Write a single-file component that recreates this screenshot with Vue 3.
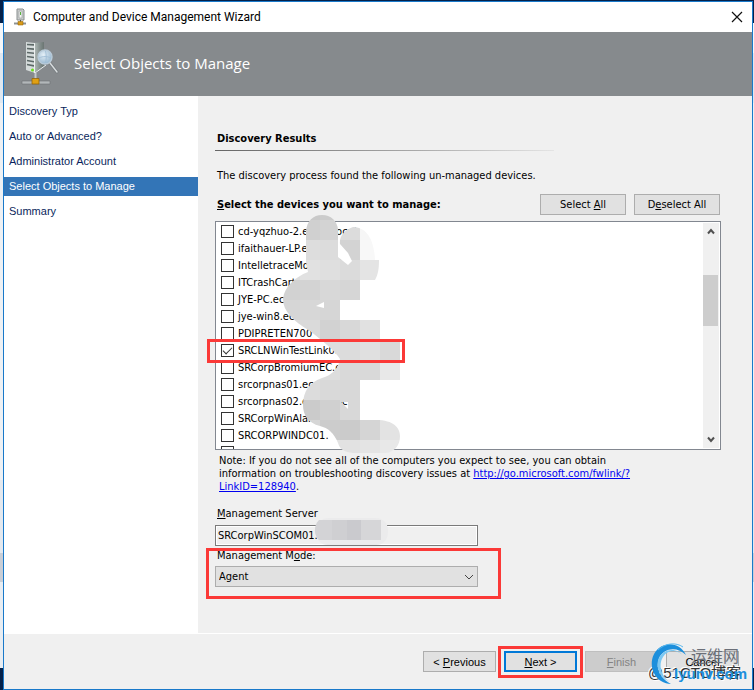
<script setup>
import { ref } from 'vue'

const steps = [
  'Discovery Typ',
  'Auto or Advanced?',
  'Administrator Account',
  'Select Objects to Manage',
  'Summary',
]
const current = 3

const devices = ref([
  { name: 'cd-yqzhuo-2.ecorp.local', on: false },
  { name: 'ifaithauer-LP.ecorp.', on: false },
  { name: 'IntelletraceMonitor.', on: false },
  { name: 'ITCrashCart.e', on: false },
  { name: 'JYE-PC.ecorp', on: false },
  { name: 'jye-win8.eco', on: false },
  { name: 'PDIPRETEN700', on: false },
  { name: 'SRCLNWinTestLink01.', on: true },
  { name: 'SRCorpBromiumEC.e', on: false },
  { name: 'srcorpnas01.ec', on: false },
  { name: 'srcorpnas02.ecorp.loc', on: false },
  { name: 'SRCorpWinAlarm', on: false },
  { name: 'SRCORPWINDC01.', on: false },
  { name: '', on: false },
])

const mode = ref('Agent')
const server = ref('SRCorpWinSCOM01.')

function setAll(value) {
  devices.value.forEach((d) => (d.on = value))
}

// Grey shade of each 20px mosaic tile, row by row
const mosaic = [
  ['c9', 'c9', 'cc', 'dc', 'f6'],
  ['d0', 'd0', 'd3', 'dc', 'f6'],
  ['dc', 'dd', 'dc', 'd3', 'f8'],
  ['dc', 'e1', 'df', 'db', 'e4'],
  ['d2', 'd3', 'd8', 'd6', 'd8'],
  ['d6', 'd7', 'd6', 'd3', 'd8'],
  ['da', 'da', 'd2', 'd8', 'e1'],
  ['e0', 'e0', 'dd', 'dc', 'e0', 'd9'],
  ['e0', 'e0', 'dd', 'd9', 'd9', 'e8'],
  ['dc', 'dc', 'd9', 'd8', 'd8', 'e8'],
  ['cb', 'cb', 'd0', 'd8', 'd9', 'e8'],
  ['cc', 'd6', 'cc', 'cb', 'd5', 'e3'],
  ['dd', 'dd', 'e2', 'e2', 'e4', 'e8'],
]
const tiles = mosaic.flatMap((row, r) =>
  row.map((v, c) => ({ x: c * 20, y: r * 20 - 15, fill: '#' + v + v + v })),
)
</script>

<template>
  <div class="desktop">
    <section class="window" aria-label="Computer and Device Management Wizard">
      <div class="titlebar">
        <svg class="app-icon" width="14" height="18" viewBox="0 0 14 18" aria-hidden="true">
          <path d="M4 1h6l1 1v10H4z" fill="#c9cccc" stroke="#8b9091" stroke-width="1" />
          <path d="M6 3h3v7H6z" fill="#f4f6f4" stroke="#a4aaa8" stroke-width=".8" />
          <path d="M7 4h1v3H7z" fill="#58b23f" />
          <path d="M7 12h1v2H7z" fill="#555" />
          <path d="M1 14.500h12v2H1z" fill="#8d9293" />
          <path d="M5 13.500h5v3.500H5z" fill="#d99b17" stroke="#9b6a09" stroke-width=".6" />
        </svg>
        <span class="title">Computer and Device Management Wizard</span>
        <button class="close" type="button" aria-label="Close">
          <svg width="12" height="12" viewBox="0 0 12 12">
            <path d="M1 1l10 10M11 1L1 11" stroke="#111" stroke-width="1.200" fill="none" />
          </svg>
        </button>
      </div>

      <header class="banner">
        <svg class="banner-icon" width="38" height="46" viewBox="0 0 38 46" aria-hidden="true">
          <defs>
            <linearGradient id="tower" x1="0" x2="1">
              <stop offset="0" stop-color="#b4bdbb" />
              <stop offset=".6" stop-color="#838e8c" />
              <stop offset="1" stop-color="#6b7572" />
            </linearGradient>
            <radialGradient id="lens" cx=".4" cy=".35" r=".7">
              <stop offset="0" stop-color="#e4eff7" />
              <stop offset="1" stop-color="#93b4cd" />
            </radialGradient>
          </defs>
          <path d="M13 2l10-1v24l-10 7z" fill="url(#tower)" />
          <path d="M5 1l9 1v30l-9-3z" fill="#d5dbdb" />
          <path d="M6 3.500l7 .4M6 7.500l7 .6M6 11.500l7 .8M6 15.500l7 1M6 19.500l7 1.200M6 23.500l7 1.400" stroke="#5d6968" stroke-width="1.600" />
          <path d="M13.500 2v30" stroke="#eef1f1" stroke-width="1" />
          <circle cx="11.500" cy="29" r="1.500" fill="#6be11c" />
          <path d="M14 32l11-8" stroke="#e7ecec" />
          <path d="M29 22l7 9" stroke="#777d80" stroke-width="3" stroke-linecap="round" />
          <path d="M29 22l7 9" stroke="#d8dcde" stroke-width="1.400" stroke-linecap="round" />
          <circle cx="24" cy="16" r="7" fill="url(#lens)" stroke="#b9cbd9" stroke-width="1.400" />
          <path d="M24.500 10c1 4 1 8 0 12M18 17c4-2 8-2 12 0" stroke="#9dbbd4" stroke-width=".8" fill="none" />
          <path d="M14.500 32v6" stroke="#c4c9ca" stroke-width="2" />
          <path d="M1 40h28v3H1z" fill="#b2b7b9" stroke="#6c7173" stroke-width=".6" />
          <path d="M11 37.500h7v5.500h-7z" fill="#e0a012" stroke="#94640a" stroke-width=".8" />
        </svg>
        <h1>Select Objects to Manage</h1>
      </header>

      <div class="body">
        <nav class="steps" aria-label="Wizard steps">
          <a v-for="(s, i) in steps" :key="s" href="#" :class="{ active: i === current }">{{ s }}</a>
        </nav>

        <main class="content">
          <h2>Discovery Results</h2>
          <div class="rule"></div>
          <p class="intro">The discovery process found the following un-managed devices.</p>

          <div class="list-head">
            <h3><u>S</u>elect the devices you want to manage:</h3>
            <button type="button" @click="setAll(true)">Select <u>A</u>ll</button>
            <button type="button" @click="setAll(false)">D<u>e</u>select All</button>
          </div>

          <div class="list">
            <div class="rows">
              <label v-for="(d, i) in devices" :key="i" class="row">
                <input v-model="d.on" type="checkbox" />
                <span>{{ d.name }}</span>
              </label>
            </div>
            <div class="scrollbar">
              <button type="button" aria-label="Scroll up">
                <svg width="8" height="7" viewBox="0 0 8 7"><path d="M1 5.500l3-3.500 3 3.500" /></svg>
              </button>
              <div class="track"><div class="thumb"></div></div>
              <button type="button" aria-label="Scroll down">
                <svg width="8" height="7" viewBox="0 0 8 7"><path d="M1 1.500L4 5l3-3.500" /></svg>
              </button>
            </div>
            <svg class="smear" width="122" height="240" viewBox="0 0 122 240" aria-hidden="true">
              <defs>
                <clipPath id="smear-shape">
                  <path d="M26 16C27 6 33 0 42 0s15 6 16 14v28l10 8 4-4-4-8-8-9c-1-7 4-14 13-17 12 0 21 10 22 33h4c0 9-1 15-4 20H80v20H60v20h40v20h20v40H80v40h16c18 0 24 8 24 16 0 10-6 16-14 17H76C68 238 60 236 58 228C54 218 48 213 40 211C28 208 23 200 23 190C23 176 30 167 42 163C52 160 58 154 60 144C55 136 45 128 30 116C13 106 3 96 3 84c1-12 12-22 25-27l-2-10z M36 91l8 2v-6z M61 187l7 7v-7z" clip-rule="evenodd" />
                </clipPath>
              </defs>
              <g clip-path="url(#smear-shape)" shape-rendering="crispEdges">
                <rect v-for="(t, i) in tiles" :key="i" :x="t.x" :y="t.y" width="20" height="20" :fill="t.fill" />
              </g>
            </svg>
            <div class="mark mark-row"></div>
          </div>

          <p class="note">
            Note: If you do not see all of the computers you expect to see, you can obtain<br />
            information on troubleshooting discovery issues at
            <a href="http://go.microsoft.com/fwlink/?LinkID=128940">http://go.microsoft.com/fwlink/?<br />LinkID=128940</a>.
          </p>

          <div class="field">
            <label for="server"><u>M</u>anagement Server</label>
            <input id="server" v-model="server" type="text" readonly />
            <svg class="pill" width="76" height="29" viewBox="0 0 76 29" aria-hidden="true">
              <rect x="2" y="1" width="72" height="27" rx="12" fill="#ebebec" />
              <path d="M5 3h13v20H5c-5-4-6-14 0-20z" fill="#d3d3d6" />
              <path d="M18 3h15v20H18z" fill="#cfcfd2" />
              <path d="M33 3h14v20H33z" fill="#cacace" />
              <path d="M47 3h20v20H47z" fill="#d6d6d8" />
            </svg>
          </div>

          <div class="field mode">
            <label for="mode">Management M<u>o</u>de:</label>
            <div class="select">
              <select id="mode" v-model="mode">
                <option>Agent</option>
              </select>
              <svg width="10" height="6" viewBox="0 0 10 6" aria-hidden="true"><path d="M1 1l4 4 4-4" /></svg>
            </div>
            <div class="mark mark-mode"></div>
          </div>
        </main>
      </div>

      <footer class="footer">
        <button type="button">&lt; <u>P</u>revious</button>
        <div class="next">
          <button type="button" class="primary"><u>N</u>ext &gt;</button>
          <div class="mark mark-next"></div>
        </div>
        <button type="button" disabled><u>F</u>inish</button>
        <button type="button">Cancel</button>
        <div class="watermark" aria-hidden="true">
          <span class="wm-blog">@51CTO博客</span>
          <svg width="44" height="42" viewBox="0 0 44 42">
            <path d="M36 12C31 1 18-2 9 5-1 13-1 30 11 38c3 2 7 3 10 3C10 35 5 25 9 15 14 5 27 3 36 12z" fill="#1c8fdc" />
            <path d="M35 15C29 6 18 6 13 14c-5 8-2 18 6 25C9 33 5 24 9 15 14 5 28 4 35 15z" fill="#7cc8f2" />
            <path d="M33 4C26-1 15 0 8 7" stroke="#5bb9ee" stroke-width="1" fill="none" />
          </svg>
          <span class="wm-name">运维网</span>
          <span class="wm-site">Iyunv.com</span>
        </div>
      </footer>
    </section>
  </div>
</template>

<style>
body {
  margin: 0;
}
</style>

<style scoped>
* {
  box-sizing: border-box;
}
.desktop {
  display: flex;
  min-height: 100vh;
  padding: 1px 1px 0 3px;
  background: linear-gradient(#04214a 0 23px, #f4f7fa 23px 53px, #dfe8f1 53px 103px, #eef1f4 103px 480px, #e3e8ee 480px 553px, #c9ced6 553px 582px, #e8edf2 582px 668px, #04214a 668px);
  font-family: "DejaVu Sans Condensed", "DejaVu Sans", "Noto Sans CJK SC", sans-serif;
  font-size: 11px;
  color: #000;
}
.window {
  flex: 1;
  display: flex;
  flex-direction: column;
  border: 1px solid #1979ca;
  background: #f0f0f0;
}
.titlebar {
  display: flex;
  align-items: center;
  height: 30px;
  padding: 0 8px 0 9px;
  background: #fff;
  font-family: Roboto, "Noto Sans", sans-serif;
  font-size: 12px;
}
.title {
  flex: 1;
  margin-left: 6px;
}
.close {
  display: flex;
  padding: 1px;
  border: 0;
  background: none;
}
.banner {
  display: flex;
  align-items: center;
  height: 64px;
  padding-left: 17px;
  background: #868a8d;
}
h1 {
  margin: 0 0 0 15px;
  padding-bottom: 2px;
  font: 400 15px/24px "Open Sans", "Noto Sans", sans-serif;
  color: #fff;
}
.body {
  flex: 1;
  display: flex;
}
.steps {
  width: 194px;
  padding-top: 6px;
  display: flex;
  flex-direction: column;
  gap: 6px;
  background: #fff;
  font: 11px/19px "Liberation Sans", sans-serif;
}
.steps a {
  padding-left: 5px;
  color: #0a1f5c;
  text-decoration: none;
}
.steps .active {
  background: #3375b7;
  color: #fff;
}
.content {
  flex: 1;
  padding: 36px 31px 0 17px;
}
h2,
h3 {
  margin: 0;
  padding-left: 2px;
  font-size: 11px;
  line-height: 14px;
  font-weight: 700;
}
.rule {
  width: 67%;
  height: 1px;
  margin-top: 4px;
  background: linear-gradient(90deg, #666, #aaa 60%, #e4e4e4);
}
.intro {
  margin: 18px 0 11px;
  padding-left: 2px;
  line-height: 14px;
}
button {
  font: inherit;
  color: #000;
}
.list-head {
  display: flex;
  align-items: center;
  gap: 8px;
  margin-bottom: 6px;
  padding-right: 1px;
}
.list-head h3 {
  flex: 1;
}
.list-head button {
  width: 86px;
  height: 21px;
  padding: 0;
  border: 1px solid #adadad;
  background: #e1e1e1;
}
.list {
  position: relative;
  display: flex;
  height: 229px;
  border: 1px solid #828790;
  background: #fff;
}
.rows {
  flex: 1;
  padding: 1px 0 0 5px;
  overflow: hidden;
}
.row {
  display: flex;
  align-items: center;
  gap: 4px;
  height: 17px;
}
.row input {
  appearance: none;
  width: 13px;
  height: 13px;
  margin: 0;
  border: 1px solid #333;
  background: #fff;
}
.row input:checked::after {
  content: "";
  display: block;
  width: 8px;
  height: 4px;
  margin: 2px 0 0 1px;
  border: solid #333;
  border-width: 0 0 1px 1px;
  transform: rotate(-45deg);
}
.scrollbar {
  display: flex;
  flex-direction: column;
  width: 16px;
  margin: 1px 1px 1px 0;
  background: #f0f0f0;
}
.scrollbar button {
  display: flex;
  align-items: center;
  justify-content: center;
  height: 17px;
  padding: 0;
  border: 0;
  background: none;
}
.scrollbar path {
  fill: none;
  stroke: #505050;
  stroke-width: 2;
}
.track {
  flex: 1;
  padding: 35px 1px 0 0;
}
.thumb {
  height: 51px;
  background: #cdcdcd;
}
.smear {
  position: absolute;
  left: 64px;
  top: -7px;
}
.mark {
  position: absolute;
  border: 3px solid #fb3937;
  pointer-events: none;
}
.mark-row {
  left: -9px;
  top: 117px;
  width: 198px;
  height: 24px;
}
.note {
  margin: 4px 0 14px;
  padding-left: 4px;
  line-height: 13px;
}
.note a {
  color: #0000f0;
}
.field {
  position: relative;
  display: flex;
  flex-direction: column;
  width: 263px;
}
.field label {
  padding-left: 2px;
  line-height: 14px;
}
.field input {
  height: 21px;
  margin-top: 4px;
  padding: 0 2px;
  border: 1px solid #7a7a7a;
  box-shadow: inset 0 0 0 1px #fff;
  background: #f0f0f0;
  font: inherit;
}
.pill {
  position: absolute;
  left: 99px;
  top: 10px;
}
.mode {
  margin-top: 3px;
}
.select {
  display: flex;
  align-items: center;
  margin-top: 3px;
  border: 1px solid #adadad;
  background: #e1e1e1;
}
.select select {
  appearance: none;
  flex: 1;
  height: 19px;
  padding: 0 3px;
  border: 0;
  background: none;
  font: inherit;
  color: #000;
}
.select svg {
  margin-right: 3px;
}
.select path {
  fill: none;
  stroke: #444;
  stroke-width: 1;
}
.mark-mode {
  left: -9px;
  top: -1px;
  width: 295px;
  height: 51px;
}
.footer {
  position: relative;
  display: flex;
  justify-content: flex-end;
  gap: 8px;
  height: 56px;
  padding: 17px 13px 0 0;
  border-top: 1px solid #fff;
  font: 11px/14px "Liberation Sans", sans-serif;
}
.footer button {
  width: 73px;
  height: 21px;
  padding: 0;
  border: 1px solid #adadad;
  background: #e1e1e1;
}
.footer .primary {
  border: 2px solid #0078d7;
}
.footer button:disabled {
  border-color: #bfbfbf;
  background: #ccc;
  color: #838383;
}
.next {
  position: relative;
}
.mark-next {
  left: -6px;
  top: -5px;
  width: 85px;
  height: 32px;
}
.watermark {
  position: absolute;
  right: 0;
  top: 8px;
  width: 104px;
  height: 44px;
  pointer-events: none;
}
.watermark svg,
.watermark span {
  position: absolute;
  white-space: nowrap;
}
.watermark svg {
  left: 2px;
  top: 1px;
}
.wm-blog {
  left: 0;
  top: 21px;
  font: 15px/20px "Liberation Sans", "Noto Sans CJK SC", sans-serif;
  color: #333;
  text-shadow: 1px 1px 0 #fff, -1px -1px 0 #fff;
}
.wm-name {
  left: 43px;
  top: 3px;
  font: 16px/20px "Noto Sans CJK SC", sans-serif;
  color: #6b6f78;
}
.wm-site {
  left: 26px;
  top: 22px;
  font: 700 15px/20px "Liberation Sans", sans-serif;
  color: #1c8fdc;
}
</style>
